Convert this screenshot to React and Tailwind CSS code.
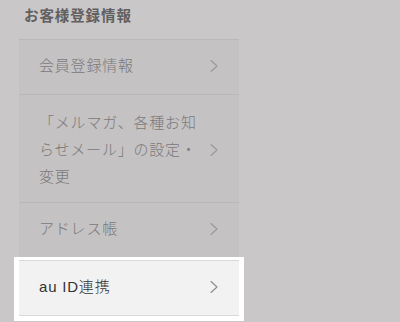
import React from "react";

const Chevron = ({ color }) => (
  <svg width="10" height="16" viewBox="0 0 10 16" fill="none" className="shrink-0">
    <path d="M2 2.5 L8 8 L2 13.5" stroke={color} strokeWidth="1.1" strokeLinecap="round" strokeLinejoin="round" />
  </svg>
);

const Row = ({ children, dim = true, tall = false }) => (
  <div className={`flex items-center border-t ${dim ? "border-[#b9b7b8] bg-[#c4c2c3]" : "border-[#d9d9d9] bg-[#f2f2f2]"} pl-[20px] pr-[20px] ${tall ? "pt-[14px] pb-[12px]" : "h-[55px] pb-[3px]"}`}>
    <div className={`w-[165px] mr-[5px] text-[15px] font-light tracking-[0.8px] leading-[27px] ${dim ? "text-[#7b797a]" : "text-[#333333]"}`}>
      {children}
    </div>
    <Chevron color={dim ? "#9a9899" : "#8c8c8c"} />
  </div>
);

export default function App() {
  return (
    <div
      className="w-[400px] h-[322px] bg-[#c9c7c8] overflow-hidden"
      style={{ fontFamily: '"Liberation Sans", "Noto Sans CJK JP", sans-serif' }}
    >
      <div className="pl-[24px] pt-[5px] h-[39px] text-[14.5px] font-bold tracking-[0.9px] text-[#615f60] leading-[22px]">
        お客様登録情報
      </div>
      <div className="ml-[19px] w-[220px]">
        <Row>会員登録情報</Row>
        <Row tall>「メルマガ、各種お知らせメール」の設定・変更</Row>
        <Row>アドレス帳</Row>
        <div className="-mx-[5px] px-[5px] pt-[3px] pb-[5px] bg-white">
          <div className="border-b border-[#d9d9d9]">
            <Row dim={false}>au ID連携</Row>
          </div>
        </div>
      </div>
    </div>
  );
}
